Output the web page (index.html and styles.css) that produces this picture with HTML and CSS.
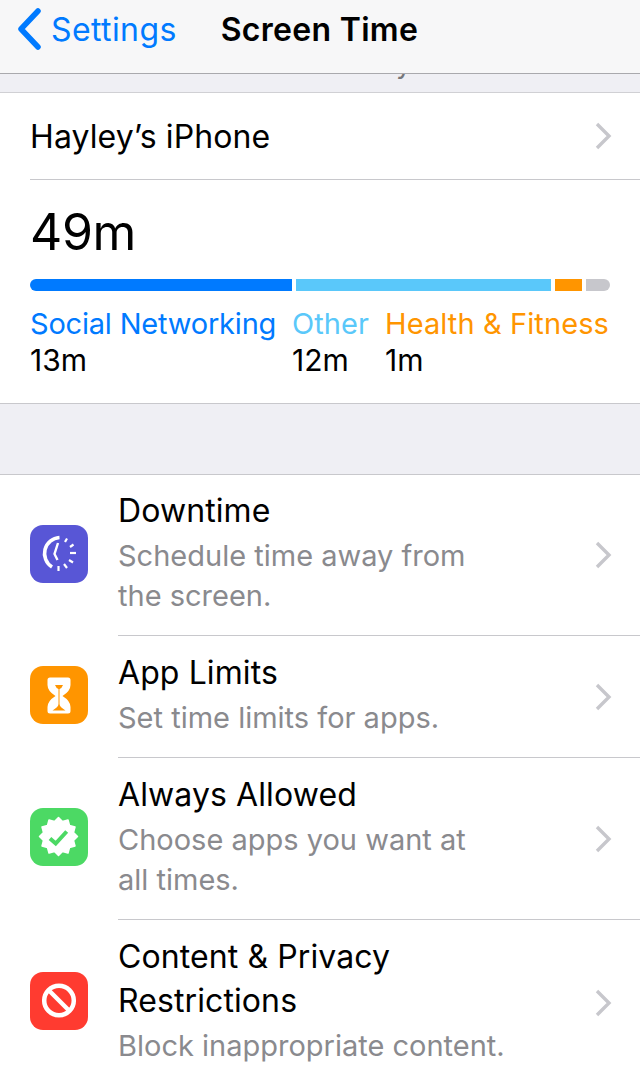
FILE: index.html
```html
<!DOCTYPE html>
<html lang="en">
<head>
    <meta charset="UTF-8">
    <meta name="viewport" content="width=device-width, initial-scale=1.0">
    <title>Screen Time</title>
    <link rel="stylesheet" href="styles.css">
</head>
<body>
    <header class="nav">
        <a class="back">
            <svg class="back-icon" width="26" height="42" viewBox="0 0 26 42"><path d="M22 3 L5 21 L22 39" fill="none" stroke="#007aff" stroke-width="5.5" stroke-linecap="round" stroke-linejoin="round"/></svg>
            <span>Settings</span>
        </a>
        <h1 class="nav-title">Screen Time</h1>
    </header>

    <div class="strip"><span class="strip-text">y</span></div>

    <section class="group">
        <div class="device">
            <span>Hayley’s iPhone</span>
            <svg class="chevron" width="18" height="28" viewBox="0 0 18 28"><path d="M3 2 L15 14 L3 26" fill="none" stroke="#c7c7cc" stroke-width="3.4"/></svg>
        </div>
        <div class="usage">
            <div class="total">49m</div>
            <div class="bar">
                <div class="seg seg-blue"></div>
                <div class="seg seg-sky"></div>
                <div class="seg seg-orange"></div>
                <div class="seg seg-gray"></div>
            </div>
            <div class="legend">
                <div class="legend-item legend-social"><span class="cat">Social Networking</span><span class="mins">13m</span></div>
                <div class="legend-item legend-other"><span class="cat">Other</span><span class="mins">12m</span></div>
                <div class="legend-item legend-health"><span class="cat">Health &amp; Fitness</span><span class="mins">1m</span></div>
            </div>
        </div>
    </section>

    <div class="spacer"></div>

    <section class="group list">
        <div class="row row-downtime">
            <div class="icon icon-purple">
                <svg width="58" height="58" viewBox="0 0 58 58">
                    <path d="M29.500 12.500 A16 16 0 0 0 22 42" fill="none" stroke="#fff" stroke-width="3.600"/>
                    <path d="M28 18 L24.500 29 L27.500 35" fill="none" stroke="#fff" stroke-width="2.400"/>
                    <g stroke="#fff" stroke-width="2.200">
                        <path d="M35 17 L37 13.500"/><path d="M40 22 L43.500 19.500"/><path d="M40 28 L46 28"/>
                        <path d="M39 35 L43 37.500"/><path d="M34 39 L37 43"/><path d="M28.500 41 L28.500 46"/>
                    </g>
                </svg>
            </div>
            <div class="row-body">
                <div class="row-text">
                    <div class="row-title">Downtime</div>
                    <div class="row-sub">Schedule time away from<br>the screen.</div>
                </div>
                <svg class="chevron" width="18" height="28" viewBox="0 0 18 28"><path d="M3 2 L15 14 L3 26" fill="none" stroke="#c7c7cc" stroke-width="3.4"/></svg>
            </div>
        </div>
        <div class="row row-limits">
            <div class="icon icon-orange">
                <svg width="58" height="58" viewBox="0 0 58 58">
                    <path d="M17.500 14 Q17.500 11.500 20 11.500 L38 11.500 Q40.500 11.500 40.500 14 L40.500 19 Q40.500 25 32.500 30 Q40.500 35 40.500 41 L40.500 45 Q40.500 47.500 38 47.500 L20 47.500 Q17.500 47.500 17.500 45 L17.500 41 Q17.500 35 25.500 30 Q17.500 25 17.500 19 Z" fill="#fff"/>
                    <path d="M25 19 L33 19 Q32 22 29.500 23 L28.500 23 Q26 22 25 19 Z" fill="#ff9500"/>
                    <path d="M28.500 22 L29.500 22 L29.500 42 L28.500 42 Z" fill="#ff9500"/>
                    <path d="M29 38 Q30 41 35.500 44.500 L22.500 44.500 Q28 41 29 38 Z" fill="#ff9500"/>
                </svg>
            </div>
            <div class="row-body">
                <div class="row-text">
                    <div class="row-title">App Limits</div>
                    <div class="row-sub">Set time limits for apps.</div>
                </div>
                <svg class="chevron" width="18" height="28" viewBox="0 0 18 28"><path d="M3 2 L15 14 L3 26" fill="none" stroke="#c7c7cc" stroke-width="3.4"/></svg>
            </div>
        </div>
        <div class="row row-allowed">
            <div class="icon icon-green">
                <svg width="58" height="58" viewBox="0 0 58 58">
                    <path d="M28.500 9.500 L32.500 13.500 L38 12 L39.500 17.500 L45 19 L43.500 24.500 L47.500 28.500 L43.500 32.500 L45 38 L39.500 39.500 L38 45 L32.500 43.500 L28.500 47.500 L24.500 43.500 L19 45 L17.500 39.500 L12 38 L13.500 32.500 L9.500 28.500 L13.500 24.500 L12 19 L17.500 17.500 L19 12 L24.500 13.500 Z" fill="#fff" stroke="#fff" stroke-width="1.500" stroke-linejoin="round"/>
                    <path d="M20 30.500 L25.700 35.500 L36.700 23.500" fill="none" stroke="#4cd964" stroke-width="4"/>
                </svg>
            </div>
            <div class="row-body">
                <div class="row-text">
                    <div class="row-title">Always Allowed</div>
                    <div class="row-sub">Choose apps you want at<br>all times.</div>
                </div>
                <svg class="chevron" width="18" height="28" viewBox="0 0 18 28"><path d="M3 2 L15 14 L3 26" fill="none" stroke="#c7c7cc" stroke-width="3.4"/></svg>
            </div>
        </div>
        <div class="row row-content">
            <div class="icon icon-red">
                <svg width="58" height="58" viewBox="0 0 58 58">
                    <circle cx="29" cy="28.500" r="14.800" fill="none" stroke="#fff" stroke-width="4.500"/>
                    <path d="M19 18.500 L39 38.500" stroke="#fff" stroke-width="4.500"/>
                </svg>
            </div>
            <div class="row-body">
                <div class="row-text">
                    <div class="row-title">Content &amp; Privacy<br>Restrictions</div>
                    <div class="row-sub">Block inappropriate content.</div>
                </div>
                <svg class="chevron" width="18" height="28" viewBox="0 0 18 28"><path d="M3 2 L15 14 L3 26" fill="none" stroke="#c7c7cc" stroke-width="3.4"/></svg>
            </div>
        </div>
    </section>
</body>
</html>
```

FILE: styles.css
```css
* {
    box-sizing: border-box;
}
html, body {
    margin: 0;
    height: 1081px;
    overflow: hidden;
}
body {
    font-family: Inter, "Liberation Sans", sans-serif;
    background-color: #ffffff;
    color: #000000;
}
.nav {
    display: flex;
    align-items: center;
    height: 74px;
    padding: 0 0 15px 16px;
    background-color: #f7f7f8;
    border-bottom: 1px solid #a9a9ad;
}
.back {
    display: flex;
    align-items: center;
    gap: 9px;
    color: #007aff;
    font-size: 32px;
    letter-spacing: 0.4px;
}
.nav-title {
    margin: 0 0 0 44px;
    font-size: 32px;
    font-weight: 600;
    letter-spacing: 0.3px;
}
.strip {
    height: 19px;
    padding-left: 396px;
    background-color: #efeff4;
    border-bottom: 1px solid #d0d0d4;
    overflow: hidden;
    color: #77777a;
}
.strip-text {
    display: block;
    margin-top: -28px;
    font-size: 28px;
    line-height: 34px;
}
.device {
    display: flex;
    align-items: center;
    justify-content: space-between;
    height: 87px;
    margin-left: 30px;
    padding-right: 28px;
    font-size: 32px;
    letter-spacing: 0.1px;
    border-bottom: 1px solid #c8c8cc;
}
.usage {
    height: 224px;
    padding: 22px 30px 0;
    border-bottom: 1px solid #c8c8cc;
}
.total {
    font-size: 50px;
    line-height: 60px;
    letter-spacing: -0.4px;
}
.bar {
    display: flex;
    gap: 4px;
    height: 12px;
    margin-top: 17px;
}
.seg-blue {
    width: 262px;
    background-color: #007aff;
    border-radius: 6px 0 0 6px;
}
.seg-sky {
    width: 255px;
    background-color: #5ac8fa;
}
.seg-orange {
    width: 27px;
    background-color: #ff9500;
}
.seg-gray {
    width: 24px;
    background-color: #c7c7cc;
    border-radius: 0 6px 6px 0;
}
.legend {
    display: flex;
    margin-top: 14px;
}
.legend-item {
    display: flex;
    flex-direction: column;
}
.legend-social {
    width: 262px;
}
.legend-other {
    width: 93px;
}
.cat {
    font-size: 29px;
    line-height: 37px;
}
.mins {
    font-size: 30px;
    line-height: 36px;
}
.legend-social .cat {
    color: #007aff;
    letter-spacing: -0.2px;
}
.legend-other .cat {
    color: #5ac8fa;
    letter-spacing: 0.1px;
}
.legend-health .cat {
    color: #ff9500;
    letter-spacing: 0.1px;
}
.spacer {
    height: 71px;
    background-color: #efeff4;
    border-bottom: 1px solid #c8c8cc;
}
.row {
    display: flex;
    align-items: center;
    padding-left: 30px;
}
.row-downtime {
    height: 161px;
}
.row-limits {
    height: 122px;
}
.row-allowed {
    height: 162px;
}
.row-content {
    height: 170px;
}
.icon {
    flex: none;
    width: 58px;
    height: 58px;
    margin-bottom: 4px;
    border-radius: 13px;
}
.row-content .icon {
    margin-bottom: 8px;
}
.icon svg {
    display: block;
}
.icon-purple {
    background-color: #5856d6;
}
.icon-orange {
    background-color: #ff9500;
}
.icon-green {
    background-color: #4cd964;
}
.icon-red {
    background-color: #ff3b30;
}
.row-body {
    flex: 1;
    align-self: stretch;
    display: flex;
    align-items: center;
    justify-content: space-between;
    margin-left: 30px;
    padding-right: 28px;
    border-bottom: 1px solid #c8c8cc;
}
.row-text {
    margin-bottom: 6px;
}
.row-content .row-body {
    border-bottom: 0;
    align-items: flex-start;
    padding-top: 14px;
}
.row-content .chevron {
    margin-top: 55px;
}
.row-title {
    font-size: 32px;
    line-height: 44px;
    letter-spacing: 0.1px;
    margin-top: 1px;
    margin-bottom: 3px;
}
.row-sub {
    font-size: 29px;
    line-height: 40px;
    color: #8a8a8e;
}
```
